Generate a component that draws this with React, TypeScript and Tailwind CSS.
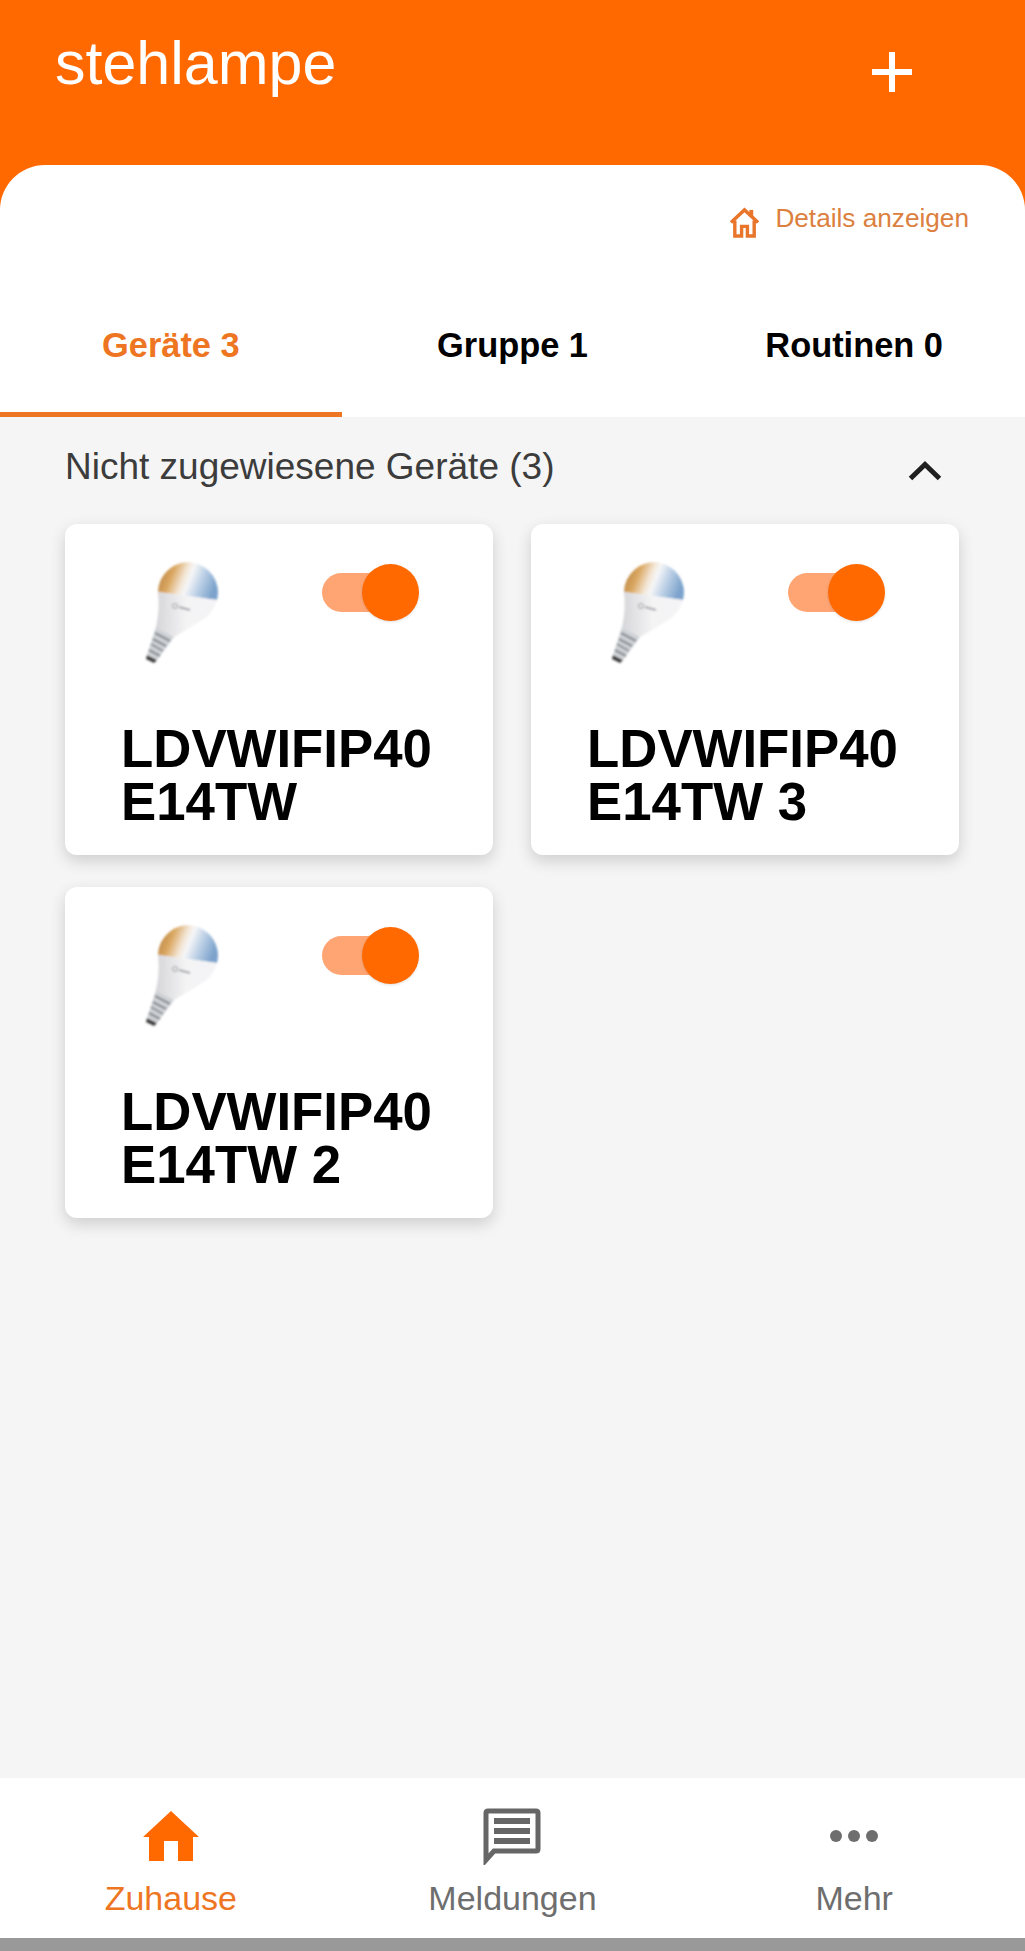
const devices = [
  { id: 1, line1: "LDVWIFIP40", line2: "E14TW" },
  { id: 2, line1: "LDVWIFIP40", line2: "E14TW 3" },
  { id: 3, line1: "LDVWIFIP40", line2: "E14TW 2" },
];

const tabs = [
  { label: "Geräte 3", active: true },
  { label: "Gruppe 1", active: false },
  { label: "Routinen 0", active: false },
];

const BulbIcon = () => (
  <svg width="120" height="120" viewBox="0 0 120 120" aria-hidden="true">
    <defs>
      <linearGradient id="dome" x1="0" y1="0.2" x2="1" y2="0.45">
        <stop offset="0" stopColor="#b5803c" />
        <stop offset="0.25" stopColor="#dba863" />
        <stop offset="0.45" stopColor="#f3e6d6" />
        <stop offset="0.55" stopColor="#f6f6f7" />
        <stop offset="0.75" stopColor="#bcd0e6" />
        <stop offset="1" stopColor="#7da3cc" />
      </linearGradient>
      <linearGradient id="body" x1="0" y1="0" x2="1" y2="0">
        <stop offset="0" stopColor="#d6d6da" />
        <stop offset="0.5" stopColor="#f4f4f5" />
        <stop offset="1" stopColor="#f4f4f6" />
      </linearGradient>
      <filter id="soft">
        <feGaussianBlur stdDeviation="1" />
      </filter>
    </defs>
    <g filter="url(#soft)">
      <path d="M38 42 A30 30 0 1 1 97 50 Z" fill="url(#dome)" />
      <path d="M38 42 L97 50 Q94 60 87 67 Q70 78 54 87 L36 77 Q40 60 38 42 Z" fill="url(#body)" />
      <path d="M36 77 L54 87 L37 110 L27 105 Z" fill="#cfd2d6" />
      <path d="M35 83 L50 91 M33 89 L46 96 M31 94 L43 101 M29 100 L40 106" stroke="#85888d" strokeWidth="2" />
      <path d="M27 105 L37 110 L34 113 L26 109 Z" fill="#3c3c3c" />
      <circle cx="55" cy="56" r="2.5" fill="none" stroke="#9a9ca0" strokeWidth="1" />
      <path d="M59 57 L70 60" stroke="#a6a8ac" strokeWidth="2" />
    </g>
  </svg>
);

const Toggle = () => (
  <div className="relative h-[39px] w-[88px] rounded-full bg-[#ffa573]">
    <div className="absolute left-[40px] top-[-9px] h-[57px] w-[57px] rounded-full bg-[#ff6900] shadow-[0_1px_3px_rgba(0,0,0,0.12)]" />
  </div>
);

const DeviceCard = ({ line1, line2 }: { line1: string; line2: string }) => (
  <div className="h-[331px] rounded-[12px] bg-white pl-[56px] shadow-[0_6px_16px_rgba(0,0,0,0.16)]">
    <div className="flex items-start pt-[26px]">
      <div className="-ml-px">
        <BulbIcon />
      </div>
      <div className="ml-[82px] mt-[23px]">
        <Toggle />
      </div>
    </div>
    <div className="mt-[52px] text-[52.8px] font-bold leading-[53px] text-black">
      <div>{line1}</div>
      <div>{line2}</div>
    </div>
  </div>
);

const NavItem = ({ label, color, children }: { label: string; color: string; children: React.ReactNode }) => (
  <div className="flex flex-col items-center">
    <div className="flex h-[62px] items-center justify-center">{children}</div>
    <span className={`mt-[12px] text-[34px] leading-[38px] ${color}`}>{label}</span>
  </div>
);

export default function App() {
  return (
    <div className="flex h-[1951px] w-[1025px] flex-col overflow-hidden bg-[#ff6900] font-['Liberation_Sans',Arial,sans-serif]">
      {/* Orange header */}
      <header className="flex h-[165px] shrink-0 items-start justify-between pl-[55px] pr-[113px]">
        <h1 className="mt-[24px] text-[61px] font-normal leading-[78px] text-white">stehlampe</h1>
        <svg className="mt-[52px]" width="40" height="40" viewBox="0 0 40 40" aria-hidden="true">
          <path d="M20 0V40M0 20H40" stroke="#fff" strokeWidth="6" />
        </svg>
      </header>

      {/* White panel */}
      <section className="shrink-0 rounded-t-[45px] bg-white">
        <div className="flex items-start justify-end gap-[15px] pr-[56px] pt-[38px]">
          <svg className="mt-[4px]" width="31" height="31" viewBox="0 0 32 32" fill="none" stroke="#e8752a" strokeWidth="3.5" aria-hidden="true">
            <path d="M2 16 L16 3 L30 16" />
            <path d="M6 14 V30 H13 V20 H19 V30 H26 V14" />
            <path d="M23 3 V10" strokeWidth="4" />
          </svg>
          <span className="text-[26.2px] leading-[30px] text-[#dc8040]">Details anzeigen</span>
        </div>
        <nav className="mt-[63px] grid h-[116px] grid-cols-3">
          {tabs.map((tab) => (
            <div
              key={tab.label}
              className={`flex justify-center pt-[24px] text-[34.4px] font-bold leading-[40px] ${
                tab.active ? "border-b-[5px] border-[#ee7623] text-[#ee7623]" : "text-black"
              }`}
            >
              {tab.label}
            </div>
          ))}
        </nav>
      </section>

      {/* Device list */}
      <main className="flex-1 bg-[#f5f5f5] px-[65px]">
        <div className="flex h-[107px] items-start justify-between pr-[18px] pt-[30px]">
          <span className="text-[37px] leading-[40px] text-[#3c3c3c]">Nicht zugewiesene Geräte (3)</span>
          <svg className="mt-[14px]" width="34" height="20" viewBox="0 0 34 20" fill="none" aria-hidden="true">
            <path d="M2.5 17.5 L17 3.5 L31.5 17.5" stroke="#1f1f1f" strokeWidth="5" />
          </svg>
        </div>
        <div className="grid grid-cols-[428px_428px] gap-x-[38px] gap-y-[32px]">
          {devices.map((device) => (
            <DeviceCard key={device.id} line1={device.line1} line2={device.line2} />
          ))}
        </div>
      </main>

      {/* Bottom navigation */}
      <footer className="grid h-[160px] shrink-0 grid-cols-3 bg-white pt-[27px]">
        <NavItem label="Zuhause" color="text-[#ee7623]">
          <svg width="56" height="50" viewBox="0 0 56 50" aria-hidden="true">
            <path d="M28 0 L56 26 H50 V50 H35 V30 H21 V50 H6 V26 H0 Z" fill="#ff6900" />
          </svg>
        </NavItem>
        <NavItem label="Meldungen" color="text-[#6e6e6e]">
          <svg width="58" height="57" viewBox="0 0 58 57" aria-hidden="true">
            <path
              d="M5 3 H53 Q55 3 55 5 V41 Q55 43 53 43 H11 L3 52 V5 Q3 3 5 3 Z"
              fill="none"
              stroke="#666"
              strokeWidth="5"
            />
            <path d="M11 13 H47 M11 23 H47 M11 33 H47" stroke="#666" strokeWidth="6" />
          </svg>
        </NavItem>
        <NavItem label="Mehr" color="text-[#6e6e6e]">
          <svg width="48" height="14" viewBox="0 0 48 14" aria-hidden="true">
            <circle cx="6" cy="7" r="6" fill="#6e6e6e" />
            <circle cx="24" cy="7" r="6" fill="#6e6e6e" />
            <circle cx="42" cy="7" r="6" fill="#6e6e6e" />
          </svg>
        </NavItem>
      </footer>
      <div className="h-[13px] shrink-0 bg-[#999999]" />
    </div>
  );
}
